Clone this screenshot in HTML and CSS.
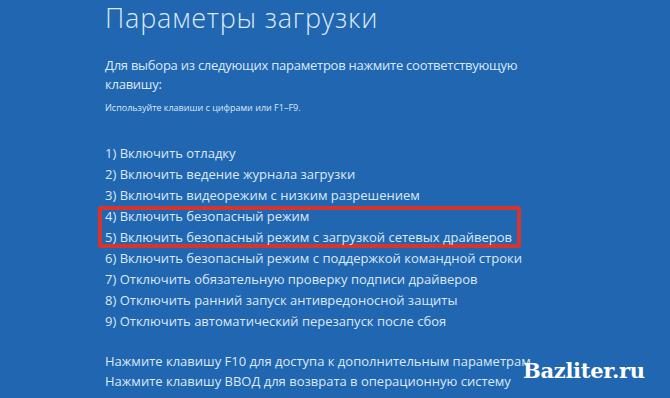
FILE: index.html
```html
<!DOCTYPE html>
<html lang="ru">
<head>
  <meta charset="UTF-8">
  <title>Параметры загрузки</title>
  <link rel="stylesheet" href="styles.css">
</head>
<body>

  <div class="screen">
    <h1>Параметры загрузки</h1>
    <p class="lead">Для выбора из следующих параметров нажмите соответствующую клавишу:</p>
    <p class="hint">Используйте клавиши с цифрами или F1–F9.</p>

    <div class="options">
      <div class="option">1) Включить отладку</div>
      <div class="option">2) Включить ведение журнала загрузки</div>
      <div class="option">3) Включить видеорежим с низким разрешением</div>
      <div class="marked">
        <div class="option">4) Включить безопасный режим</div>
        <div class="option">5) Включить безопасный режим с загрузкой сетевых драйверов</div>
      </div>
      <div class="option">6) Включить безопасный режим с поддержкой командной строки</div>
      <div class="option">7) Отключить обязательную проверку подписи драйверов</div>
      <div class="option">8) Отключить ранний запуск антивредоносной защиты</div>
      <div class="option">9) Отключить автоматический перезапуск после сбоя</div>
    </div>

    <div class="footer">
      <div>Нажмите клавишу F10 для доступа к дополнительным параметрам</div>
      <div>Нажмите клавишу ВВОД для возврата в операционную систему</div>
    </div>
  </div>

  <div class="watermark">Bazliter.ru</div>

</body>
</html>
```

FILE: styles.css
```css
:root {
  --bg: #2066b0;
  --text: #dce9f7;
  --mark: #d8342b;
}

body {
  margin: 0;
  width: 670px;
  height: 398px;
  overflow: hidden;
  background: var(--bg);
  color: var(--text);
  font-family: 'Open Sans', 'Noto Sans', sans-serif;
  position: relative;
}

.screen {
  padding: 0 0 0 105px;
}

h1 {
  margin: 0;
  font-size: 27px;
  font-weight: 300;
  line-height: 36px;
  letter-spacing: 0.8px;
}

.lead {
  width: 440px;
  margin: 20px 0 0;
  font-size: 13px;
  line-height: 19px;
  letter-spacing: -0.25px;
}

.hint {
  margin: 8px 0 0;
  font-size: 9px;
  line-height: 12px;
}

.options {
  margin-top: 29px;
  font-size: 13px;
  line-height: 21px;
}

.option {
  white-space: nowrap;
}

/* red frame around items 4 and 5, drawn inside the line spacing */
.marked {
  width: fit-content;
  margin-left: -7px;
  padding: 0 5px 0 3px;
  border: 4px solid var(--mark);
  border-radius: 3px;
}

.marked .option:first-child {
  margin-top: -4px;
}

.marked .option:last-child {
  margin-bottom: -4px;
}

.footer {
  margin-top: 19px;
  font-size: 13px;
  line-height: 20px;
}

.watermark {
  position: absolute;
  left: 523px;
  top: 361px;
  color: #fff;
  font-family: 'DejaVu Serif', serif;
  font-weight: bold;
  font-size: 21px;
  line-height: 20px;
  letter-spacing: -0.3px;
}
```
